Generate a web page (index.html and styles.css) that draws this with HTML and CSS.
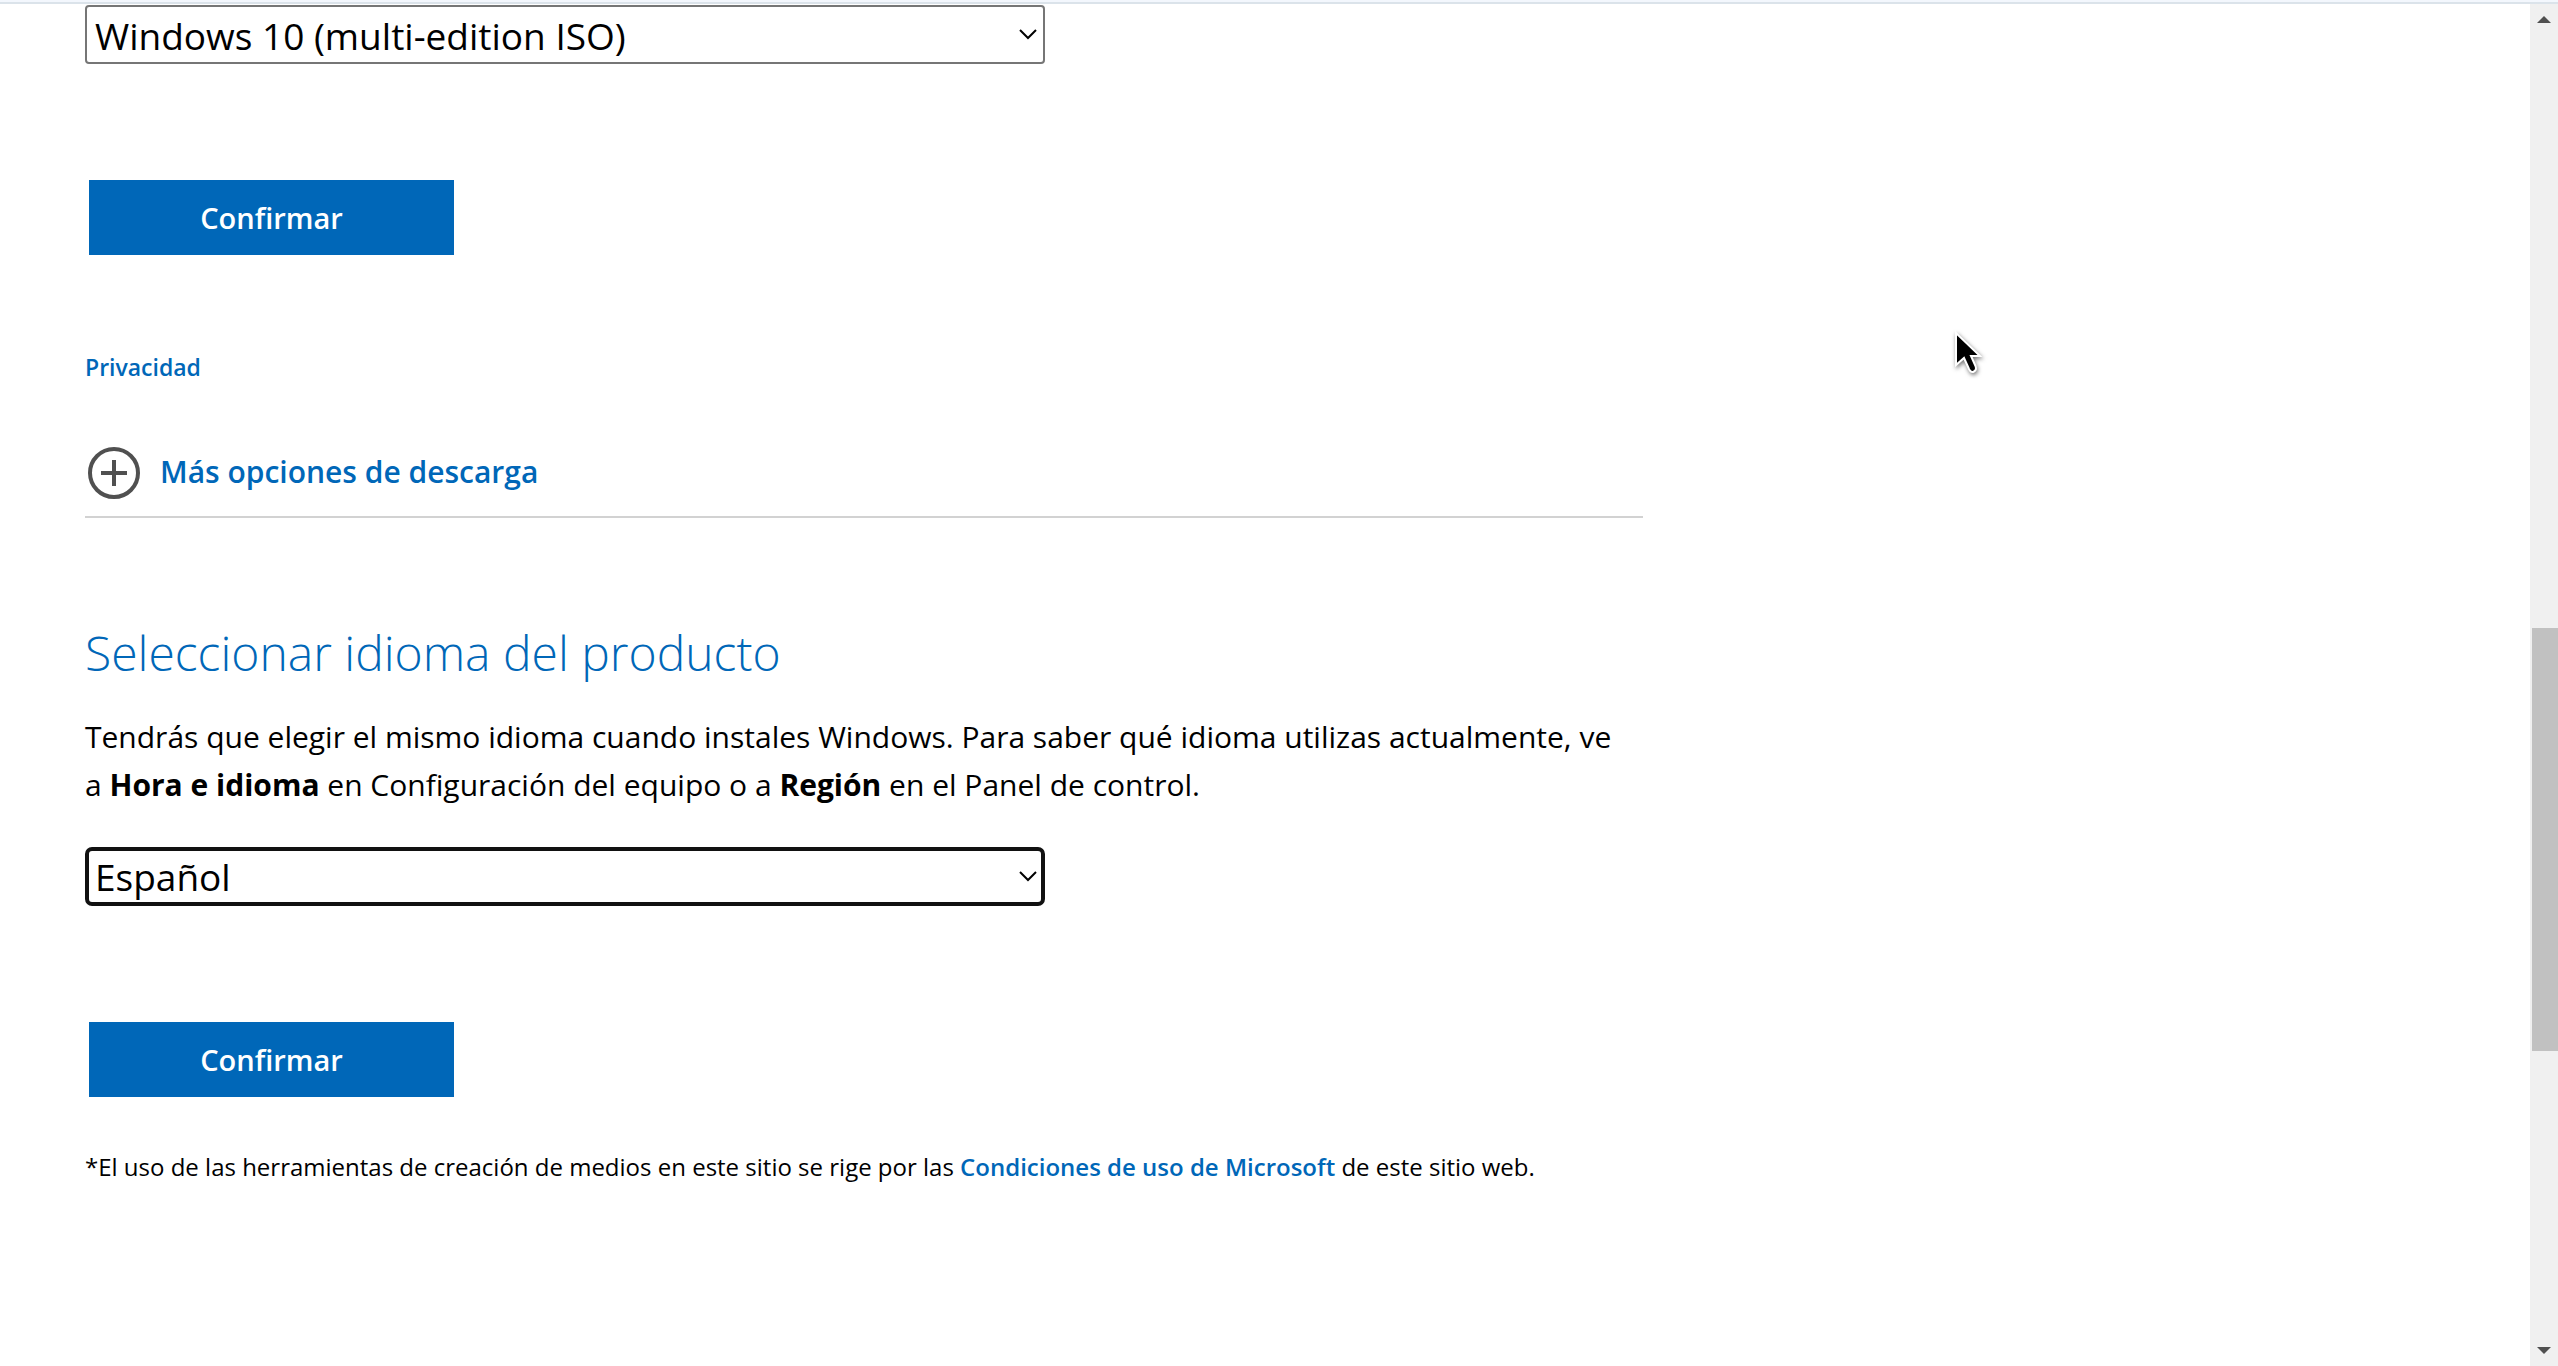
FILE: index.html
```html
<!DOCTYPE html>
<html lang="es">
<head>
<meta charset="utf-8">
<meta name="viewport" content="width=device-width, initial-scale=1">
<title>Descargar Windows 10</title>
<link rel="stylesheet" href="styles.css">
</head>
<body>
<div class="topline"></div>
<div class="viewport">
  <main class="content">
    <form class="edition">
      <div class="picker">
        <select class="select" aria-label="Seleccionar edición">
          <option>Windows 10 (multi-edition ISO)</option>
        </select>
        <svg class="chevron" viewBox="0 0 18 12" aria-hidden="true"><path d="M1 2l8 8 8-8"/></svg>
      </div>
      <button class="confirm" type="button">Confirmar</button>
    </form>
    <a class="privacy" href="#">Privacidad</a>
    <a class="more" href="#">
      <svg class="plus" viewBox="0 0 52 52" aria-hidden="true"><circle cx="26" cy="26" r="24"/><path d="M26 13v26M13 26h26"/></svg>
      <span class="more-label">Más opciones de descarga</span>
    </a>
    <h2 class="heading">Seleccionar idioma del producto</h2>
    <p class="intro">Tendrás que elegir el mismo idioma cuando instales Windows. Para saber qué idioma utilizas actualmente, ve a <strong>Hora e idioma</strong> en Configuración del equipo o a <strong>Región</strong> en el Panel de control.</p>
    <form class="language">
      <div class="picker">
        <select class="select select-active" aria-label="Seleccionar idioma del producto">
          <option>Español</option>
        </select>
        <svg class="chevron" viewBox="0 0 18 12" aria-hidden="true"><path d="M1 2l8 8 8-8"/></svg>
      </div>
      <button class="confirm" type="button">Confirmar</button>
    </form>
    <p class="note">*El uso de las herramientas de creación de medios en este sitio se rige por las <a href="#">Condiciones de uso de Microsoft</a> de este sitio web.</p>
  </main>
  <div class="scrollbar" aria-hidden="true">
    <svg class="arrow" viewBox="0 0 14 7"><path d="M7 0l7 7H0z"/></svg>
    <div class="track"><div class="thumb"></div></div>
    <svg class="arrow" viewBox="0 0 14 7"><path d="M0 0h14L7 7z"/></svg>
  </div>
</div>
<svg class="pointer" viewBox="0 0 30 46" aria-hidden="true"><path d="M3 3v32l8-7 5 11q2 4 5 2.500t1.500-5.500L18 26h9z"/></svg>
</body>
</html>
```
FILE: styles.css
```css
* {
  box-sizing: border-box;
}

body {
  margin: 0;
  min-height: 100vh;
  display: flex;
  flex-direction: column;
  background: #fff;
  color: #000;
  font-family: "Open Sans", "Noto Sans", sans-serif;
  font-size: 30px;
  line-height: 48px;
}

a {
  color: #0067b8;
  font-weight: 600;
  text-decoration: none;
}

.topline {
  height: 4px;
  background: #f3f7fd;
  border-bottom: 2px solid #dbe3ea;
}

.viewport {
  flex: 1;
  display: grid;
  grid-template-columns: 1fr 28px;
}

.content {
  display: flex;
  flex-direction: column;
  align-items: flex-start;
  width: 100%;
  max-width: 1643px;
  padding: 1px 0 0 85px;
}

.edition,
.language {
  display: flex;
  flex-direction: column;
  align-items: flex-start;
  gap: 116px;
  width: 100%;
}

.picker {
  position: relative;
  width: 100%;
  max-width: 960px;
}

.select {
  display: block;
  width: 100%;
  height: 59px;
  padding: 2px 40px 0 8px;
  appearance: none;
  border: 2px solid #767676;
  border-radius: 4px;
  background: #fff;
  color: #000;
  font-family: inherit;
  font-size: 37px;
}

.select-active {
  padding: 0 38px 0 6px;
  border: 4px solid #111;
  border-radius: 7px;
}

.chevron {
  position: absolute;
  top: 23px;
  right: 8px;
  width: 18px;
  height: 12px;
  fill: none;
  stroke: #000;
  stroke-width: 2;
}

.confirm {
  width: 365px;
  height: 75px;
  margin-left: 4px;
  padding: 0;
  border: 0;
  background: #0067b8;
  color: #fff;
  font-family: inherit;
  font-size: 29px;
  font-weight: 600;
}

.privacy {
  margin-top: 88px;
  font-size: 23px;
}

.more {
  display: flex;
  align-items: center;
  gap: 20px;
  width: 100%;
  margin-top: 56px;
  padding: 0 0 17px 3px;
  border-bottom: 2px solid #d2d2d2;
}

.more-label {
  padding-bottom: 2px;
}

.plus {
  width: 52px;
  height: 52px;
  fill: none;
  stroke: #505050;
  stroke-width: 4;
}

.heading {
  margin: 99px 0 0;
  color: #0067b8;
  font-size: 48px;
  font-weight: 300;
  line-height: 72px;
}

.intro {
  margin: 24px 0 38px;
  padding-right: 20px;
}

.intro strong {
  font-weight: 700;
}

.note {
  margin: 46px 0 0;
  font-size: 24px;
}

.scrollbar {
  display: flex;
  flex-direction: column;
  align-items: center;
  padding: 12px 0;
  background: #f0f0f0;
}

.arrow {
  width: 14px;
  height: 7px;
  fill: #505050;
}

.track {
  flex: 1;
  align-self: stretch;
  display: grid;
  grid-template-rows: 605fr 423fr 296fr;
  padding-left: 2px;
}

.thumb {
  grid-row: 2;
  background: #c1c1c1;
}

.pointer {
  position: absolute;
  top: 330px;
  left: 1953px;
  width: 30px;
  height: 46px;
  fill: #000;
  stroke: #fff;
  stroke-width: 2;
  filter: drop-shadow(1px 2px 2px #0008);
}
```
